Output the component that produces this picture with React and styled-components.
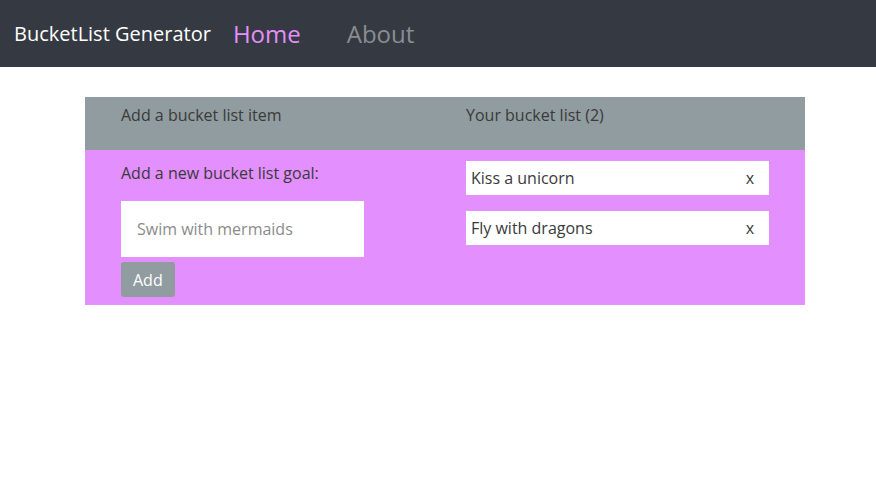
import styled, { createGlobalStyle } from "styled-components";
import { useState } from "react";

const GlobalStyle = createGlobalStyle`
  body {
    margin: 0;
    font-family: "Open Sans", "Liberation Sans", sans-serif;
    color: #3a3a3a;
    background: #fff;
  }
`;

const Nav = styled.nav`
  display: flex;
  align-items: center;
  height: 67px;
  padding: 0 14px;
  background: #353a42;
`;

const Brand = styled.div`
  font-size: 20px;
  color: #fff;
  margin-right: 22px;
`;

const NavLink = styled.a`
  font-size: 24px;
  color: ${({ $active }) => ($active ? "#e38ffd" : "#8a8d92")};
  margin-right: 46px;
  text-decoration: none;
  padding-bottom: 1px;
`;

const Container = styled.div`
  width: 720px;
  margin: 30px 0 0 85px;
`;

const Row = styled.div`
  display: grid;
  grid-template-columns: 360px 360px;
  background: ${({ $bg }) => $bg};
`;

const HeadCell = styled.div`
  height: 53px;
  padding: 7px 0 0 ${({ $pad }) => $pad}px;
  box-sizing: border-box;
  font-size: 16px;
`;

const LeftCol = styled.div`
  padding: 12px 0 8px 36px;
  display: flex;
  flex-direction: column;
  align-items: flex-start;
`;

const Label = styled.div`
  font-size: 16px;
  margin-bottom: 17px;
`;

const Input = styled.input`
  width: 243px;
  height: 56px;
  box-sizing: border-box;
  border: none;
  padding: 0 16px;
  font-family: inherit;
  font-size: 16px;
  outline: none;
  caret-color: #000;
  &::placeholder {
    color: #8b8b8b;
  }
`;

const AddButton = styled.button`
  margin-top: 5px;
  height: 35px;
  padding: 0 12px;
  border: none;
  border-radius: 3px;
  background: #909c9f;
  color: #fff;
  font-family: inherit;
  font-size: 16px;
`;

const RightCol = styled.div`
  padding: 11px 0 0 21px;
  display: flex;
  flex-direction: column;
  gap: 16px;
`;

const Item = styled.div`
  width: 303px;
  height: 34px;
  box-sizing: border-box;
  background: #fff;
  display: flex;
  align-items: center;
  justify-content: space-between;
  padding: 0 15px 0 5px;
  font-size: 16px;
`;

const Remove = styled.span`
  font-size: 16px;
  cursor: pointer;
`;

export default function App() {
  const [items, setItems] = useState(["Kiss a unicorn", "Fly with dragons"]);
  const [text, setText] = useState("");

  return (
    <>
      <GlobalStyle />
      <Nav>
        <Brand>BucketList Generator</Brand>
        <NavLink $active href="#">Home</NavLink>
        <NavLink href="#">About</NavLink>
      </Nav>
      <Container>
        <Row $bg="#909c9f">
          <HeadCell $pad={36}>Add a bucket list item</HeadCell>
          <HeadCell $pad={21}>Your bucket list ({items.length})</HeadCell>
        </Row>
        <Row $bg="#e38ffd">
          <LeftCol>
            <Label>Add a new bucket list goal:</Label>
            <Input
              placeholder="Swim with mermaids"
              value={text}
              onChange={(e) => setText(e.target.value)}
            />
            <AddButton
              onClick={() => {
                if (text) setItems([...items, text]);
                setText("");
              }}
            >
              Add
            </AddButton>
          </LeftCol>
          <RightCol>
            {items.map((item, i) => (
              <Item key={i}>
                {item}
                <Remove onClick={() => setItems(items.filter((_, j) => j !== i))}>x</Remove>
              </Item>
            ))}
          </RightCol>
        </Row>
      </Container>
    </>
  );
}
